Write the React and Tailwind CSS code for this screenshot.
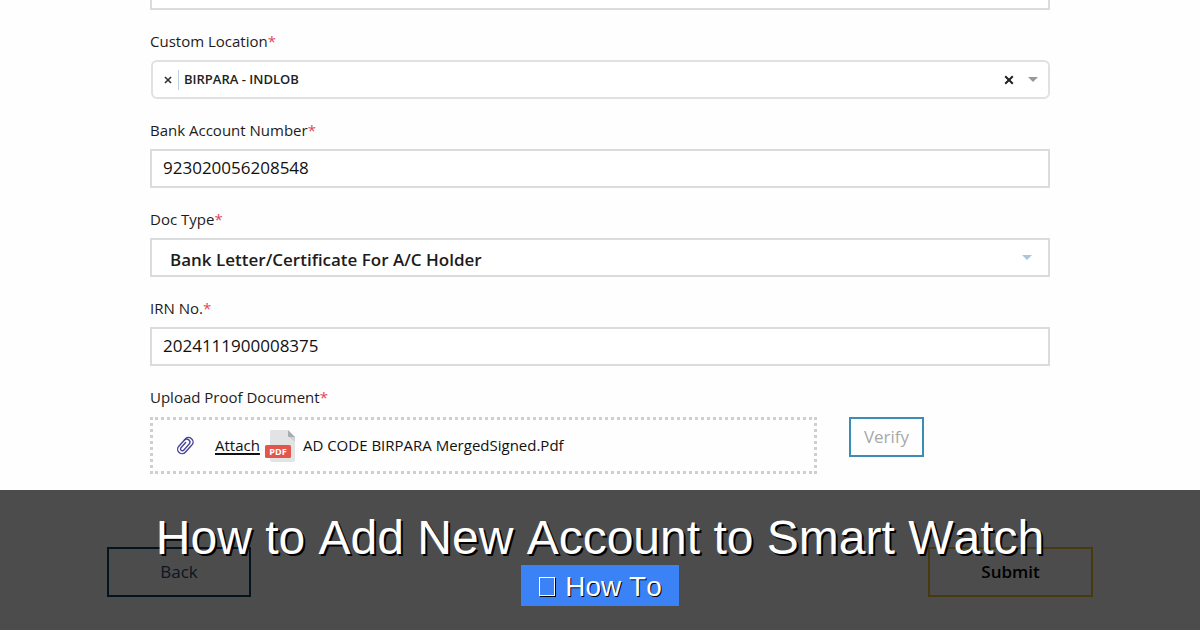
import { useState } from "react";

const inputClass =
  "block h-[39px] w-full border-2 border-[#d9dbdc] bg-white px-[11px] pb-0.5 text-[17px] text-[#111] outline-none";

const Label = ({ htmlFor, children }) => (
  <label htmlFor={htmlFor} className="block mb-2 text-[15px] leading-[22px] text-[#1c1c1c]">
    {children}
    <span className="text-[#e0455d]">*</span>
  </label>
);

const Caret = ({ className }) => (
  <svg viewBox="0 0 12 6" className={className} aria-hidden="true">
    <path d="M0 0h12L6 6z" fill="currentColor" />
  </svg>
);

const Cross = ({ className }) => (
  <svg viewBox="0 0 10 10" className={className} fill="none" stroke="currentColor" aria-hidden="true">
    <path d="M1.2 1.2l7.6 7.6M8.8 1.2L1.2 8.8" strokeWidth="2" />
  </svg>
);

const ClipIcon = () => (
  <svg viewBox="0 0 20 20" className="w-5 h-5" fill="none" stroke="#45449c" strokeLinecap="round" aria-hidden="true">
    <g transform="rotate(42 10 10)" strokeWidth="1.4">
      <path d="M14.4 5v9.4a4.4 4.4 0 0 1-8.8 0V4.2a4.4 3.9 0 0 1 8.8 0" />
      <path d="M5.6 6a3.2 3.2 0 0 1 6.2-1v9a1.8 1.8 0 0 1-3.6 0V7" />
    </g>
  </svg>
);

const PdfIcon = () => (
  <svg viewBox="0 0 32 34" className="w-8 h-[34px]" aria-hidden="true">
    <path d="M6 1h17l7 7v23a2 2 0 0 1-2 2H7a2 2 0 0 1-2-2V2a1 1 0 0 1 1-1z" fill="#e2e3e4" />
    <path d="M23 1l7 7h-6a1 1 0 0 1-1-1z" fill="#a9adb0" />
    <path d="M24 8h6v5z" fill="#cfd1d2" />
    <rect x="0" y="16" width="26" height="13" rx="1.5" fill="#e2574c" />
    <text x="13" y="26" textAnchor="middle" fontFamily="Open Sans, sans-serif" fontSize="9" fontWeight="700" fill="#fff">
      PDF
    </text>
  </svg>
);

const App = () => {
  const [form, setForm] = useState({
    name: "",
    account: "923020056208548",
    irn: "2024111900008375"
  });

  const handleChange = (e) => setForm({ ...form, [e.target.name]: e.target.value });

  return (
    <div className="relative min-h-screen overflow-hidden bg-[#fefefe] font-['Open_Sans',sans-serif]">
      <form onSubmit={(e) => e.preventDefault()}>
        <div className="mx-auto -mt-[29px] flex w-3/4 flex-col gap-5">
          <input name="name" aria-label="Name" className={inputClass} value={form.name} onChange={handleChange} />

          {/* Custom location */}
          <div>
            <Label htmlFor="location">Custom Location</Label>
            <div className="ml-px flex h-[39px] items-center rounded-md border-2 border-[#dfe1e2] bg-white pl-[11px] pr-2.5">
              <button type="button" aria-label="Remove location" className="text-[#333]">
                <Cross className="w-2 h-2" />
              </button>
              <span className="ml-1.5 h-5 w-px bg-[#bcd3dd]" />
              <select id="location" className="flex-1 appearance-none bg-transparent pl-[5px] text-[13px] font-semibold text-[#222] outline-none">
                <option>BIRPARA - INDLOB</option>
              </select>
              <button type="button" aria-label="Clear" className="mr-3.5 text-[#222]">
                <Cross className="w-2.5 h-2.5" />
              </button>
              <Caret className="w-2.5 h-[5px] text-[#999]" />
            </div>
          </div>

          <div>
            <Label htmlFor="account">Bank Account Number</Label>
            <input id="account" name="account" className={inputClass} value={form.account} onChange={handleChange} />
          </div>

          {/* Doc type */}
          <div>
            <Label htmlFor="docType">Doc Type</Label>
            <div className="flex h-[39px] items-center border-2 border-[#d9dbdc] bg-white px-4">
              <select id="docType" className="flex-1 appearance-none bg-transparent pt-1 pl-0.5 text-[17px] font-semibold text-[#1c1c1c] outline-none">
                <option>Bank Letter/Certificate For A/C Holder</option>
              </select>
              <Caret className="w-2.5 h-[5px] text-[#a9c6dd]" />
            </div>
          </div>

          <div>
            <Label htmlFor="irn">IRN No.</Label>
            <input id="irn" name="irn" className={inputClass} value={form.irn} onChange={handleChange} />
          </div>

          {/* Upload */}
          <div>
            <Label htmlFor="proof">Upload Proof Document</Label>
            <div className="flex items-start gap-8 pt-px">
              <div className="flex h-[57px] w-[667px] items-center border-3 border-dotted border-[#cfcfcf] pl-[22px] text-[15px] text-[#111]">
                <ClipIcon />
                <input id="proof" type="file" className="sr-only" />
                <label htmlFor="proof" className="ml-5 mr-[5px] cursor-pointer underline decoration-2 underline-offset-2">
                  Attach
                </label>
                <PdfIcon />
                <span className="ml-1.5">AD CODE BIRPARA MergedSigned.Pdf</span>
              </div>
              <button type="button" className="h-10 w-[75px] border-2 border-[#3b8db5] text-[17px] text-[#a8a8a8]">
                Verify
              </button>
            </div>
          </div>
        </div>

        <div className="mt-[73px] flex justify-between px-[107px] pb-8">
          <button type="button" className="h-[50px] w-36 border-2 border-[#0d4468] text-[17px] text-[#2c4a70]">
            Back
          </button>
          <button type="submit" className="h-[50px] w-[165px] border-2 border-[#ecc030] text-[17px] font-semibold text-black">
            Submit
          </button>
        </div>
      </form>

      {/* Caption banner */}
      <div className="absolute inset-x-0 bottom-0 flex h-[140px] flex-col items-center bg-black/70 pt-5 font-['Liberation_Sans',sans-serif] text-white [font-kerning:none]">
        <h1 className="text-5xl leading-[55px] [text-shadow:2px_2px_0_#000]">How to Add New Account to Smart Watch</h1>
        <p className="flex h-[41px] items-center gap-2.5 bg-[#3b82f6] pr-[17px] pl-[18px] pt-0.5 text-[28px] [text-shadow:1px_1px_0_#000]">
          <span className="h-[19px] w-4 border border-white shadow-[1px_1px_0_#000]" />
          How To
        </p>
      </div>
    </div>
  );
};

export default App;
